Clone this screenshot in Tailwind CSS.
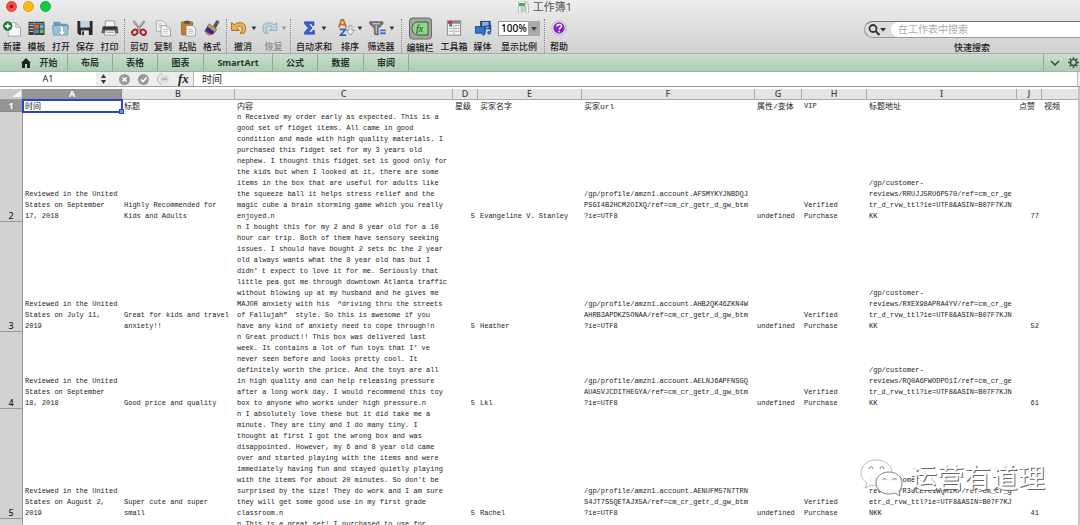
<!DOCTYPE html>
<html lang="zh-CN">
<head>
<meta charset="utf-8">
<meta name="viewport" content="width=device-width, initial-scale=1">
<title>工作簿1</title>
<script src="https://cdn.jsdelivr.net/npm/@tailwindcss/browser@4"></script>
</head>
<body class="flex h-screen flex-col overflow-hidden bg-white font-['Noto_Sans','Noto_Sans_CJK_SC',sans-serif] text-[#222]">

<header class="shrink-0 bg-linear-to-b from-[#ededed] to-[#d0d0d0]">
  <!-- Title bar -->
  <div class="grid h-[13px] grid-cols-[1fr_auto_1fr] items-center">
    <div class="flex gap-[6px] pl-[6px]">
      <button aria-label="关闭" class="flex size-[11px] items-center justify-center rounded-full border border-[#e0443e] bg-[#fc4a48]"><span class="size-[3px] rounded-full bg-[#7a0c08]"></span></button>
      <button aria-label="最小化" class="size-[11px] rounded-full border border-[#e5a50f] bg-[#fdb912]"></button>
      <button aria-label="缩放" class="size-[11px] rounded-full border border-[#16b536] bg-[#10cd40]"></button>
    </div>
    <h1 class="flex items-center gap-1 pl-[10px] text-[11px] leading-[13px] text-[#555]">
      <svg class="h-3 w-[11px]" viewBox="0 0 11 12"><path d="M.5 0h7l3 3v9H.5z" fill="#fafafa" stroke="#aaa" stroke-width=".7"/><path d="M1 2h6v3H1z" fill="#48a957"/><path d="M7 0v3h3M2 6h7M2 8h7M2 10h7M4 5v6M7 5v6" fill="none" stroke="#88a98b" stroke-width=".7"/></svg>
      工作簿1
    </h1>
    <span></span>
  </div>

  <!-- Toolbar -->
  <div class="flex h-[41px] items-stretch overflow-hidden border-b border-[#aaa] pt-[6px] text-[9px] leading-[12px] font-medium whitespace-nowrap">
    <div class="flex w-[125px] shrink-0 border-r border-dotted border-[#888]">
      <button class="flex w-6 flex-col items-center gap-1"><svg class="h-[19px] w-5" viewBox="0 0 20 19"><path d="M6 4h8l5 5v9H6z" fill="#f8f8f8" stroke="#999" stroke-width=".8"/><path d="M14 4v5h5z" fill="#ddd" stroke="#999" stroke-width=".6"/><circle cx="5.500" cy="7.500" r="4.600" fill="#1c7c3c" stroke="#0e5124" stroke-width=".6"/><path d="M5.500 4.700v5.600M2.700 7.500h5.600" stroke="#fff" stroke-width="1.700"/></svg><span>新建</span></button>
      <button class="flex w-[25px] flex-col items-center gap-1"><svg class="h-[19px] w-5" viewBox="0 0 20 19"><rect x="1" y="3" width="17" height="14" rx="1" fill="#403c3a"/><path d="M1 5h17M7 3v14" stroke="#aaa" stroke-width=".8"/><path d="M2 7h4M2 10h4M2 13h4" stroke="#ddd"/><path d="M8 6h4v4H8z" fill="#e9662c"/><path d="M13 6h4v4h-4z" fill="#54b5e7"/><path d="M8 11h4v4H8z" fill="#4a8cdf"/><path d="M13 11h4v4h-4z" fill="#72c146"/></svg><span>模板</span></button>
      <button class="flex w-6 flex-col items-center gap-1"><svg class="h-[19px] w-5" viewBox="0 0 20 19"><path d="M2 3h7l1 2h7v11H2z" fill="#6c9cb9"/><path d="M1 7h17l-1 10H2z" fill="#9bc1d7" stroke="#5e8ba6" stroke-width=".7"/><path d="M8 7c4 0 5 2 4.500 6h2.500l-4 5-4-5h2.500c.5-3 0-4.500-1.500-6z" fill="#fff" stroke="#6c8fa5" stroke-width=".6"/></svg><span>打开</span></button>
      <button class="flex w-6 flex-col items-center gap-1"><svg class="h-[19px] w-5" viewBox="0 0 20 19"><path d="M2 2h16v15H4l-2-2z" fill="#292b30"/><path d="M5 2h10v7H5z" fill="#c6d4df"/><path d="M6 12h8v5H6z" fill="#e5e5e5"/><path d="M7 13h2v4H7z" fill="#292b30"/></svg><span>保存</span></button>
      <button class="flex w-[25px] flex-col items-center gap-1"><svg class="h-[19px] w-5" viewBox="0 0 20 19"><path d="M5 2h10v7H5z" fill="#f3f3f3" stroke="#777" stroke-width=".7"/><path d="M2 8h16l1 7H1z" fill="#5b5f63"/><path d="M3 8h14v3H3z" fill="#303336"/><path d="M5 12h10l1 5H4z" fill="#f5f5f5" stroke="#777" stroke-width=".6"/><path d="M6 14h8" stroke="#64a2b7"/></svg><span>打印</span></button>
    </div>
    <div class="flex w-[102px] shrink-0 border-r border-dotted border-[#888] pl-[2px]">
      <button class="flex w-6 flex-col items-center gap-1"><svg class="h-[19px] w-5" viewBox="0 0 20 19"><path d="M4 2l8 10M16 2L8 12" stroke="#777" stroke-width="2.200"/><path d="M4 2l8 10M16 2L8 12" stroke="#ddd" stroke-width=".7"/><ellipse cx="5.500" cy="14" rx="3" ry="2.600" transform="rotate(-35 5.500 14)" fill="none" stroke="#a8211a" stroke-width="2"/><ellipse cx="14.500" cy="14" rx="3" ry="2.600" transform="rotate(35 14.500 14)" fill="none" stroke="#a8211a" stroke-width="2"/></svg><span>剪切</span></button>
      <button class="flex w-6 flex-col items-center gap-1"><svg class="h-[19px] w-5" viewBox="0 0 20 19"><path d="M3 2h7l3 3v8H3z" fill="#f4f4f4" stroke="#999" stroke-width=".8"/><path d="M5 5h4M5 7h5M5 9h5" stroke="#aaa" stroke-width=".7"/><path d="M8 7h6l4 4v7H8z" fill="#fafafa" stroke="#888" stroke-width=".8"/><path d="M10 11h3M10 13h6M10 15h6M14 7v4h4" fill="none" stroke="#aaa" stroke-width=".7"/></svg><span>复制</span></button>
      <button class="flex w-[25px] flex-col items-center gap-1"><svg class="h-[19px] w-5" viewBox="0 0 20 19"><rect x="3" y="3" width="12" height="14" rx="1" fill="#bc812f" stroke="#7d521a" stroke-width=".6"/><path d="M6 4V2h2l1-1 1 1h2v3H6z" fill="#555"/><path d="M8 7h7l3 3v8H8z" fill="#f4f4f4" stroke="#888" stroke-width=".7"/><path d="M10 11h5M10 13h6M10 15h6" stroke="#aaa" stroke-width=".7"/></svg><span>粘贴</span></button>
      <button class="flex w-6 flex-col items-center gap-1"><svg class="h-[19px] w-5" viewBox="0 0 20 19"><path d="M15 1l3 2-4 7-3-3z" fill="#55585e"/><path d="M7 5l8 6-2 3-8-6z" fill="#c39a65" stroke="#735023" stroke-width=".6"/><path d="M5 8l8 6c-2 3-5 3-7 3l-4-4z" fill="#382d92"/><path d="M2 12c3 1 4 4 8 4l-3 2z" fill="#d9693c"/></svg><span>格式</span></button>
    </div>
    <div class="flex w-[64px] shrink-0 border-r border-dotted border-[#888] pl-px">
      <button class="flex w-[30px] flex-col items-center gap-1"><svg class="h-[19px] w-[28px]" viewBox="0 0 28 19"><path d="M2 4v8h8l-3-3c3-3 7-1 6 3-.3 1-1 2-2 3h4c5-7-1-15-10-9z" fill="#f5b34e" stroke="#9c6514"/><path d="M23 8h5l-2.500 4z" fill="#333"/></svg><span>撤消</span></button>
      <button class="flex w-[31px] flex-col items-center gap-1 text-[#8a8a8a]" disabled><svg class="h-[19px] w-[28px]" viewBox="0 0 28 19"><path d="M17 4v8H9l3-3c-3-3-7-1-6 3 .3 1 1 2 2 3H4C-1 8 5 0 14 6z" fill="#b9d4e3" stroke="#8fabba"/><path d="M22 8h5l-2.500 4z" fill="#999"/></svg><span>恢复</span></button>
    </div>
    <div class="flex w-[111px] shrink-0 border-r border-dotted border-[#888]">
      <button class="flex w-[46px] flex-col items-center gap-1"><svg class="h-[19px] w-[28px]" viewBox="0 0 28 19"><path d="M4 3h10v4h-1.500l-1-2H8l4 4.500L8 14h4l1-2h1.500v4H4v-2l4-4.500L4 5z" fill="#385ee0" stroke="#1b36a0" stroke-width=".6"/><path d="M22 8h5l-2.500 4z" fill="#333"/></svg><span>自动求和</span></button>
      <button class="flex w-[26px] flex-col items-center gap-1"><svg class="h-[19px] w-[26px]" viewBox="0 0 26 19"><path d="M1 9l3-8h2l3 8M3 6h4" fill="none" stroke="#c56c1f" stroke-width="1.800"/><path d="M2 11h6l-5 6h6" fill="none" stroke="#3163be" stroke-width="1.800"/><path d="M12 7h3v5h3l-4.500 5L9 12h3z" fill="#eee" stroke="#888" stroke-width=".8"/><path d="M21 8h5l-2.500 4z" fill="#333"/></svg><span>排序</span></button>
      <button class="flex w-9 flex-col items-center gap-1"><svg class="h-[19px] w-[28px]" viewBox="0 0 28 19"><path d="M2 3h14v2l-5 5v7l-4-1v-6L2 5z" fill="#777" stroke="#444" stroke-width=".7"/><path d="M5 5h8M9 6v9" stroke="#ddd"/><path d="M13 12h6M13 15h6" stroke="#3c75d9" stroke-width="2"/><path d="M23 8h5l-2.500 4z" fill="#333"/></svg><span>筛选器</span></button>
    </div>
    <div class="flex w-[143px] shrink-0 border-r border-dotted border-[#888]">
      <button class="flex w-9 flex-col items-center gap-1"><svg class="h-[19px] w-[23px] overflow-visible" viewBox="0 0 23 19"><rect x=".5" y="-1" width="22" height="21" rx="3" fill="#a4a4a4" stroke="#6a6a6a"/><path d="M9 3h10v13H9c-8 0-8-13 0-13z" fill="#8fd68a" stroke="#2c652c"/><text x="7" y="13" font-size="10" font-style="italic" font-family="Liberation Serif, serif" fill="#1c3f1c">fx</text></svg><span>编辑栏</span></button>
      <button class="flex w-8 flex-col items-center gap-1"><svg class="h-[19px] w-5" viewBox="0 0 20 19"><rect x="3" y="2" width="14" height="15" fill="#f4f4f4" stroke="#888"/><path d="M3 2h14v3H3z" fill="#888"/><path d="M4 2h4v3H4z" fill="#bd392b"/><path d="M5 5h3v3H5z" fill="#3c79c4"/><path d="M9 7h7M5 10h4M11 10h5M5 13h4M11 13h5M10 8v8" stroke="#aaa"/></svg><span>工具箱</span></button>
      <button class="flex w-[25px] flex-col items-center gap-1"><svg class="h-[19px] w-5" viewBox="0 0 20 19"><path d="M7 2h11v9H7z" fill="#303d4b"/><path d="M9 3h7v7H9z" fill="#7eb4dd"/><path d="M2 8h10v7H2z" fill="#3876c5" stroke="#214b86"/><path d="M12 15V8l6-1v7" fill="none" stroke="#1c58a8" stroke-width="1.500"/><circle cx="10.500" cy="15.500" r="2" fill="#2b70c9"/><circle cx="16.500" cy="14.500" r="2" fill="#2b70c9"/></svg><span>媒体</span></button>
      <div class="flex w-[48px] flex-col items-center gap-1">
        <div class="relative flex h-[19px] w-[42px] items-center">
          <select id="zoom" class="h-[15px] w-full appearance-none border border-[#999] bg-white pl-[2px] text-[10px] leading-[13px] text-black"><option>100%</option></select>
          <svg class="pointer-events-none absolute top-[2px] right-0 h-[15px] w-[12px]" viewBox="0 0 12 15"><path d="M0 0h12v15H0z" fill="#aaa"/><path d="M3 6h6L6 10z" fill="#444"/></svg>
        </div>
        <label for="zoom">显示比例</label>
      </div>
    </div>
    <button class="flex w-7 shrink-0 flex-col items-center gap-1"><svg class="h-[19px] w-[18px]" viewBox="0 0 18 19"><circle cx="9" cy="9.500" r="7.500" fill="#fff" stroke="#aaa"/><circle cx="9" cy="9.500" r="6" fill="#8425c7"/><path d="M6.700 8c0-3 5-3 5-.3 0 1.800-2.500 1.600-2.500 3.500M9.200 12.500v1.600" fill="none" stroke="#fff" stroke-width="1.600"/></svg><span>帮助</span></button>
    <div class="ml-auto flex w-[216px] shrink-0 flex-col items-center gap-1">
      <div class="mt-[2px] flex h-[17px] w-full items-center rounded-l-full border border-r-0 border-[#999] border-t-[#777] bg-[#ddd]">
        <svg class="h-[15px] w-[26px] shrink-0" viewBox="0 0 26 15"><circle cx="8" cy="6.500" r="3.500" fill="none" stroke="#333" stroke-width="1.800"/><path d="M10.500 9l4 4" stroke="#333" stroke-width="2.200"/><path d="M15 6h6l-3 3.500z" fill="#333"/></svg>
        <input id="search" type="text" placeholder="在工作表中搜索" class="h-[15px] min-w-0 flex-1 rounded-l-full bg-white pl-[7px] text-[10px] leading-[15px] font-normal placeholder:text-[#aaa]">
      </div>
      <label for="search">快速搜索</label>
    </div>
  </div>
</header>

<!-- Ribbon tabs -->
<nav class="flex h-[18px] shrink-0 items-stretch border-b border-[#9db8a3] bg-linear-to-b from-[#c9dfcd] to-[#acceb3] text-[9px] leading-[17px] font-bold whitespace-nowrap text-[#2c352e]">
  <a href="#" class="flex w-[68px] items-center justify-center gap-2 border-r border-[#8fac95] pl-3"><svg class="size-[10px]" viewBox="0 0 10 10"><path d="M5 0L0 5h1v5h3V6h2v4h3V5h1z" fill="#222"/></svg>开始</a>
  <a href="#" class="w-[45px] border-r border-[#8fac95] text-center">布局</a>
  <a href="#" class="w-[45px] border-r border-[#8fac95] text-center">表格</a>
  <a href="#" class="w-[46px] border-r border-[#8fac95] text-center">图表</a>
  <a href="#" class="w-[69px] border-r border-[#8fac95] text-center">SmartArt</a>
  <a href="#" class="w-[45px] border-r border-[#8fac95] text-center">公式</a>
  <a href="#" class="w-[46px] border-r border-[#8fac95] text-center">数据</a>
  <a href="#" class="w-[45px] border-r border-[#8fac95] text-center">审阅</a>
  <div class="ml-auto flex w-[37px] items-center gap-2 overflow-hidden border-l border-[#8fac95] pl-[6px]">
    <button aria-label="折叠" class="shrink-0"><svg class="h-[6px] w-[10px]" viewBox="0 0 10 6"><path d="M1 1l4 4 4-4" fill="none" stroke="#3f4f43" stroke-width="1.600"/></svg></button>
    <button aria-label="设置" class="shrink-0"><svg class="size-[11px]" viewBox="0 0 11 11"><circle cx="5.500" cy="5.500" r="3" fill="none" stroke="#46554a" stroke-width="1.700"/><path d="M5.500 0v2M5.500 9v2M0 5.500h2M9 5.500h2M1.600 1.600L3 3M8 8l1.400 1.400M1.600 9.400L3 8M8 3l1.400-1.400" stroke="#46554a" stroke-width="1.500"/></svg></button>
  </div>
</nav>

<!-- Formula bar -->
<div class="flex h-[15px] shrink-0 items-stretch border-b border-[#999] bg-[#ededed] text-[10px] leading-[14px]">
  <input aria-label="名称框" value="A1" class="w-[96px] bg-white text-center text-[9px]">
  <button aria-label="选择名称" class="flex w-[14px] items-center justify-center"><svg class="h-[10px] w-[5px]" viewBox="0 0 5 10"><path d="M2.500 0L5 4H0zM2.500 10L0 6h5z" fill="#333"/></svg></button>
  <div class="flex w-[84px] items-center gap-2 border-r border-[#bbb] pl-[9px]">
    <button aria-label="取消"><svg class="size-[11px]" viewBox="0 0 11 11"><circle cx="5.500" cy="5.500" r="5.500" fill="#999"/><path d="M3.500 3.500l4 4M7.500 3.500l-4 4" stroke="#fff" stroke-width="1.600"/></svg></button>
    <button aria-label="输入"><svg class="size-[11px]" viewBox="0 0 11 11"><circle cx="5.500" cy="5.500" r="5.500" fill="#999"/><path d="M3 5.500l2 2 3.500-4" fill="none" stroke="#fff" stroke-width="1.600"/></svg></button>
    <button aria-label="更多"><svg class="h-3 w-[13px]" viewBox="0 0 13 12"><path d="M5 .5C-1 3-1 9 5 11.500" fill="none" stroke="#aaa"/><circle cx="7.500" cy="6" r="4.500" fill="#ddd"/><path d="M5 6h5" stroke="#aaa" stroke-width="1.400"/></svg></button>
    <button aria-label="插入函数" class="font-['Liberation_Serif',serif] text-[13px] leading-[12px] font-bold italic">fx</button>
  </div>
  <input aria-label="编辑栏" value="时间" class="min-w-0 flex-1 bg-white pl-2">
  <span class="w-[3px] border-l border-[#bbb] bg-[#eee]"></span>
</div>

<!-- Sheet -->
<main class="min-h-0 flex-1 overflow-hidden border-r-2 border-[#c4c4c4] pt-[2px]">
<table class="w-full table-fixed border-separate border-spacing-0 font-['Liberation_Mono','Noto_Sans_CJK_SC',monospace] text-[7px] leading-[11px] whitespace-pre text-[#222]">
  <colgroup><col class="w-[23px]"><col class="w-[99px]"><col class="w-[113px]"><col class="w-[218px]"><col class="w-[25px]"><col class="w-[104px]"><col class="w-[173px]"><col class="w-[47px]"><col class="w-[65px]"><col class="w-[150px]"><col class="w-[25px]"><col></colgroup>
  <thead class="font-['Noto_Sans',sans-serif] text-[9px] text-[#444]">
    <tr class="h-[11px] leading-[10px]">
      <td class="border-r border-b border-[#999] bg-[#c9c9c9] p-0"><svg class="ml-auto h-[8px] w-[10px]" viewBox="0 0 10 8"><path d="M9 0v7H0z" fill="#f5f5f5"/></svg></td>
      <th scope="col" class="border-r border-b border-[#888] bg-[#959595] p-0 text-white">A</th>
      <th scope="col" class="border-r border-b border-[#aaa] bg-[#e4e4e4] p-0 font-medium">B</th>
      <th scope="col" class="border-r border-b border-[#aaa] bg-[#e4e4e4] p-0 font-medium">C</th>
      <th scope="col" class="border-r border-b border-[#aaa] bg-[#e4e4e4] p-0 font-medium">D</th>
      <th scope="col" class="border-r border-b border-[#aaa] bg-[#e4e4e4] p-0 font-medium">E</th>
      <th scope="col" class="border-r border-b border-[#aaa] bg-[#e4e4e4] p-0 font-medium">F</th>
      <th scope="col" class="border-r border-b border-[#aaa] bg-[#e4e4e4] p-0 font-medium">G</th>
      <th scope="col" class="border-r border-b border-[#aaa] bg-[#e4e4e4] p-0 font-medium">H</th>
      <th scope="col" class="border-r border-b border-[#aaa] bg-[#e4e4e4] p-0 font-medium">I</th>
      <th scope="col" class="border-r border-b border-[#aaa] bg-[#e4e4e4] p-0 font-medium">J</th>
      <th scope="col" class="border-b border-[#aaa] bg-[#e4e4e4] p-0"></th>
    </tr>
  </thead>
  <tbody class="align-bottom">
    <tr class="h-3 text-[8px]">
      <th scope="row" class="border-r border-b border-[#888] bg-[#959595] p-0 font-['Noto_Sans',sans-serif] text-[9px] text-white">1</th>
      <td class="relative p-0 pl-[2px] outline-2 -outline-offset-1 outline-[#2a44c4]">时间<span class="absolute -right-[2px] -bottom-[2px] size-[5px] border border-[#2a44c4] bg-[#5b9be8]"></span></td>
      <td class="p-0 pl-[2px]">标题</td><td class="p-0 pl-[2px]">内容</td><td class="p-0 pl-[2px]">星级</td><td class="p-0 pl-[2px]">买家名字</td><td class="p-0 pl-[2px]">买家url</td><td class="p-0 pl-[2px]">属性/变体</td><td class="p-0 pl-[2px] text-[7px]">VIP</td><td class="p-0 pl-[2px]">标题地址</td><td class="p-0 pl-[2px]">点赞</td><td class="p-0 pl-[2px]">视频</td>
    </tr>
    <tr class="h-[110px]">
      <th scope="row" class="border-r border-b border-[#999] bg-[#d2d2d2] p-0 font-['Noto_Sans',sans-serif] text-[9px] font-medium">2</th>
      <td class="p-0 pl-[2px]">Reviewed in the United
States on September
17, 2018</td>
      <td class="p-0 pl-[2px]">Highly Recommended for
Kids and Adults</td>
      <td class="p-0 pl-[2px]">n Received my order early as expected. This is a
good set of fidget items. All came in good
condition and made with high quality materials. I
purchased this fidget set for my 3 years old
nephew. I thought this fidget set is good only for
the kids but when I looked at it, there are some
items in the box that are useful for adults like
the squeeze ball it helps stress relief and the
magic cube a brain storming game which you really
enjoyed.n</td>
      <td class="p-0 pr-[3px] text-right">5</td>
      <td class="p-0 pl-[2px]">Evangeline V. Stanley</td>
      <td class="p-0 pl-[2px]">/gp/profile/amzn1.account.AFSMYKYJNBDQJ
PSGI4B2HCM2OIXQ/ref=cm_cr_getr_d_gw_btm
?ie=UTF8</td>
      <td class="p-0 pl-[2px]">undefined</td>
      <td class="p-0 pl-[2px]">Verified
Purchase</td>
      <td class="p-0 pl-[2px]">/gp/customer-
reviews/RRUJJ5RU6P570/ref=cm_cr_ge
tr_d_rvw_ttl?ie=UTF8&amp;ASIN=B07F7KJN
KK</td>
      <td class="p-0 pr-[3px] text-right">77</td><td></td>
    </tr>
    <tr class="h-[110px]">
      <th scope="row" class="border-r border-b border-[#999] bg-[#d2d2d2] p-0 font-['Noto_Sans',sans-serif] text-[9px] font-medium">3</th>
      <td class="p-0 pl-[2px]">Reviewed in the United
States on July 11,
2019</td>
      <td class="p-0 pl-[2px]">Great for kids and travel
anxiety!!</td>
      <td class="p-0 pl-[2px]">n I bought this for my 2 and 8 year old for a 10
hour car trip. Both of them have sensory seeking
issues. I should have bought 2 sets bc the 2 year
old always wants what the 8 year old has but I
didn<span class="inline-block w-2">’</span>t expect to love it for me. Seriously that
little pea got me through downtown Atlanta traffic
without blowing up at my husband and he gives me
MAJOR anxiety with his <span class="inline-block w-2 text-right">“</span>driving thru the streets
of Fallujah<span class="inline-block w-2">”</span> style. So this is awesome if you
have any kind of anxiety need to cope through!n</td>
      <td class="p-0 pr-[3px] text-right">5</td>
      <td class="p-0 pl-[2px]">Heather</td>
      <td class="p-0 pl-[2px]">/gp/profile/amzn1.account.AHB2QK46ZKN4W
AHRB3APDKZ5ONAA/ref=cm_cr_getr_d_gw_btm
?ie=UTF8</td>
      <td class="p-0 pl-[2px]">undefined</td>
      <td class="p-0 pl-[2px]">Verified
Purchase</td>
      <td class="p-0 pl-[2px]">/gp/customer-
reviews/RXEX98APRA4YV/ref=cm_cr_ge
tr_d_rvw_ttl?ie=UTF8&amp;ASIN=B07F7KJN
KK</td>
      <td class="p-0 pr-[3px] text-right">52</td><td></td>
    </tr>
    <tr class="h-[77px]">
      <th scope="row" class="border-r border-b border-[#999] bg-[#d2d2d2] p-0 font-['Noto_Sans',sans-serif] text-[9px] font-medium">4</th>
      <td class="p-0 pl-[2px]">Reviewed in the United
States on September
18, 2018</td>
      <td class="p-0 pl-[2px]">Good price and quality</td>
      <td class="p-0 pl-[2px]">n Great product!! This box was delivered last
week. It contains a lot of fun toys that I<span class="inline-block w-2">’</span>ve
never seen before and looks pretty cool. It
definitely worth the price. And the toys are all
in high quality and can help releasing pressure
after a long work day. I would recommend this toy
box to anyone who works under high pressure.n</td>
      <td class="p-0 pr-[3px] text-right">5</td>
      <td class="p-0 pl-[2px]">Lkl</td>
      <td class="p-0 pl-[2px]">/gp/profile/amzn1.account.AELNJ6APFNSGQ
AUA5VJCDITHEGYA/ref=cm_cr_getr_d_gw_btm
?ie=UTF8</td>
      <td class="p-0 pl-[2px]">undefined</td>
      <td class="p-0 pl-[2px]">Verified
Purchase</td>
      <td class="p-0 pl-[2px]">/gp/customer-
reviews/RQ0A6FWODPO1I/ref=cm_cr_ge
tr_d_rvw_ttl?ie=UTF8&amp;ASIN=B07F7KJN
KK</td>
      <td class="p-0 pr-[3px] text-right">61</td><td></td>
    </tr>
    <tr class="h-[110px]">
      <th scope="row" class="border-r border-b border-[#999] bg-[#d2d2d2] p-0 font-['Noto_Sans',sans-serif] text-[9px] font-medium">5</th>
      <td class="p-0 pl-[2px]">Reviewed in the United
States on August 2,
2019</td>
      <td class="p-0 pl-[2px]">Super cute and super
small</td>
      <td class="p-0 pl-[2px]">n I absolutely love these but it did take me a
minute. They are tiny and I do many tiny. I
thought at first I got the wrong box and was
disappointed. However, my 6 and 8 year old came
over and started playing with the items and were
immediately having fun and stayed quietly playing
with the items for about 20 minutes. So don't be
surprised by the size! They do work and I am sure
they will get some good use in my first grade
classroom.n</td>
      <td class="p-0 pr-[3px] text-right">5</td>
      <td class="p-0 pl-[2px]">Rachel</td>
      <td class="p-0 pl-[2px]">/gp/profile/amzn1.account.AENUFM57N7TRN
S4JT7S5QETAJX5A/ref=cm_cr_getr_d_gw_btm
?ie=UTF8</td>
      <td class="p-0 pl-[2px]">undefined</td>
      <td class="p-0 pl-[2px]">Verified
Purchase</td>
      <td class="p-0 pl-[2px]">/gp/customer-
reviews/R36CE7C1WQHIRF/ref=cm_cr_g
etr_d_rvw_ttl?ie=UTF8&amp;ASIN=B07F7KJ
NKK</td>
      <td class="p-0 pr-[3px] text-right">41</td><td></td>
    </tr>
    <tr class="h-[110px] align-top">
      <th scope="row" class="border-r border-[#999] bg-[#d2d2d2] p-0"></th>
      <td></td><td></td>
      <td class="p-0 pl-[2px]">n This is a great set! I purchased to use for</td>
      <td></td><td></td><td></td><td></td><td></td><td></td><td></td><td></td>
    </tr>
  </tbody>
</table>
</main>

<!-- Account watermark over the sheet -->
<div class="pointer-events-none absolute right-[35px] bottom-[28px] flex items-center gap-[7px]">
  <svg class="h-[40px] w-[45px]" viewBox="0 0 45 40"><path d="M18 3C9 3 3 9 3 16c0 5 3 8 6 10l-2 5 6-3c13 3 21-4 21-12S27 3 18 3z" fill="#fff" fill-opacity=".85" stroke="#aaa" stroke-width=".8"/><path d="M31 15c-8 0-13 5-13 11s5 11 13 11c2 0 4 0 6-1l5 3-1-5c2-2 3-5 3-8 0-6-5-11-13-11z" fill="#fff" fill-opacity=".9" stroke="#777" stroke-width=".9"/><path d="M11 12c0-3 4-3 4 0M22 12c0-3 4-3 4 0M25 23c0-2 3-2 3 0M35 23c0-2 3-2 3 0" fill="none" stroke="#777"/></svg>
  <span class="font-['Noto_Sans_CJK_SC',sans-serif] text-[27px] leading-[36px] font-normal text-white [text-shadow:1px_1px_0_#666]">运营有道理</span>
</div>
</body>
</html>
